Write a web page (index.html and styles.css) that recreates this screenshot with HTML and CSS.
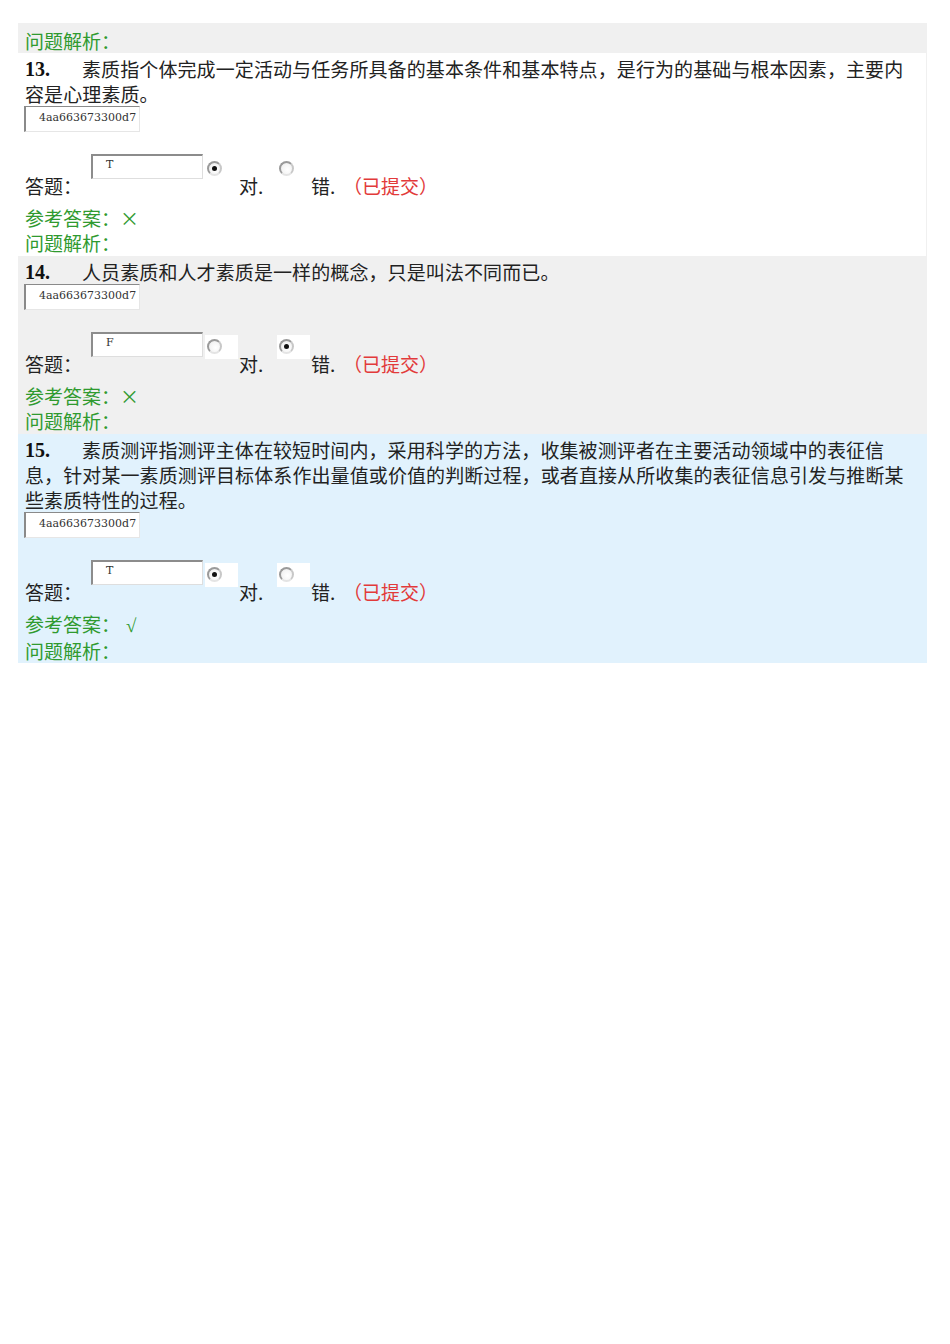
FILE: index.html
```html
<!DOCTYPE html>
<html lang="zh-CN">
<head>
<meta charset="utf-8">
<title>答题</title>
<link rel="stylesheet" href="styles.css">
</head>
<body>
<div class="list">
  <div class="sec tail gray">
    <div class="green">问题解析：</div>
  </div>

  <div class="sec white">
    <p class="stem"><b class="num">13.</b>素质指个体完成一定活动与任务所具备的基本条件和基本特点，是行为的基础与根本因素，主要内<br>容是心理素质。</p>
    <div class="code">4aa663673300d7</div>
    <div class="ans">
      <span class="lbl">答题：</span>
      <span class="tb">T</span>
      <span class="rbox"><span class="radio on"></span></span>
      <span class="opt">对.</span>
      <span class="rbox"><span class="radio"></span></span>
      <span class="opt last">错.</span>
      <span class="sub">（已提交）</span>
    </div>
    <div class="green ref">参考答案：×</div>
    <div class="green">问题解析：</div>
  </div>

  <div class="sec gray">
    <p class="stem"><b class="num">14.</b>人员素质和人才素质是一样的概念，只是叫法不同而已。</p>
    <div class="code">4aa663673300d7</div>
    <div class="ans">
      <span class="lbl">答题：</span>
      <span class="tb">F</span>
      <span class="rbox"><span class="radio"></span></span>
      <span class="opt">对.</span>
      <span class="rbox"><span class="radio on"></span></span>
      <span class="opt last">错.</span>
      <span class="sub">（已提交）</span>
    </div>
    <div class="green ref">参考答案：×</div>
    <div class="green">问题解析：</div>
  </div>

  <div class="sec blue">
    <p class="stem"><b class="num">15.</b>素质测评指测评主体在较短时间内，采用科学的方法，收集被测评者在主要活动领域中的表征信<br>息，针对某一素质测评目标体系作出量值或价值的判断过程，或者直接从所收集的表征信息引发与推断某<br>些素质特性的过程。</p>
    <div class="code">4aa663673300d7</div>
    <div class="ans">
      <span class="lbl">答题：</span>
      <span class="tb">T</span>
      <span class="rbox"><span class="radio on"></span></span>
      <span class="opt">对.</span>
      <span class="rbox"><span class="radio"></span></span>
      <span class="opt last">错.</span>
      <span class="sub">（已提交）</span>
    </div>
    <div class="green ref">参考答案：<span class="tick">√</span></div>
    <div class="green">问题解析：</div>
  </div>
</div>
</body>
</html>
```

FILE: styles.css
```css
html, body {
  margin: 0;
  padding: 0;
  background: #ffffff;
}

body {
  padding: 23px 23px 0 18px;
  font-family: "Noto Sans CJK SC", "Noto Sans", sans-serif;
  font-size: 19px;
  line-height: 25px;
  color: #222222;
}

.list {
  width: 909px;
  background: #f0f0f0;
}

.sec {
  padding: 3px 7px 1px 7px;
}

.sec.tail {
  padding-top: 5px;
  padding-bottom: 0;
}

.gray {
  background: #f0f0f0;
}

.white {
  background: #ffffff;
  margin-right: 1px;
}

.blue {
  background: #e1f2fd;
  padding-bottom: 0;
}

.stem {
  margin: 0;
  white-space: nowrap;
  letter-spacing: 0.1px;
}

.num {
  display: inline-block;
  width: 57px;
  height: 25px;
  vertical-align: top;
  font-family: "Liberation Serif", serif;
  font-weight: bold;
  font-size: 20px;
  line-height: 27px;
  letter-spacing: 0;
  color: #111111;
}

.code {
  width: 100px;
  height: 21px;
  margin-left: -1px;
  padding: 3px 0 0 13px;
  background: #ffffff;
  border-top: 1px solid #8a8a8a;
  border-left: 2px solid #8a8a8a;
  border-right: 1px solid #e6e6e6;
  border-bottom: 1px solid #e6e6e6;
  font-family: "DejaVu Serif", serif;
  font-size: 11px;
  line-height: 16px;
  color: #333333;
  overflow: hidden;
  white-space: nowrap;
}

.ans {
  display: flex;
  align-items: flex-start;
  height: 44px;
  margin-top: 22px;
  margin-bottom: 7px;
}

.lbl,
.opt,
.sub {
  align-self: flex-end;
  line-height: 25px;
}

.lbl {
  width: 57px;
}

.tb {
  width: 96px;
  height: 22px;
  margin-left: 9px;
  padding: 0 0 0 13px;
  background: #ffffff;
  border-top: 2px solid #8c8c8c;
  border-left: 2px solid #8c8c8c;
  border-right: 1px solid #dedede;
  border-bottom: 1px solid #dedede;
  font-family: "DejaVu Serif", serif;
  font-size: 11px;
  line-height: 18px;
  color: #333333;
}

.rbox {
  width: 33px;
  height: 24px;
  margin-top: 3px;
  margin-left: 2px;
  background: #ffffff;
}

.radio {
  display: block;
  position: relative;
  width: 11px;
  height: 11px;
  margin: 4px 0 0 2px;
  border-radius: 50%;
  border: 2px solid;
  border-color: #9a9a9a #c8c8c8 #e4e4e4 #9a9a9a;
  background: radial-gradient(circle at 60% 60%, #ffffff 0%, #f4f4f4 60%, #dddddd 100%);
}

.radio.on::after {
  content: "";
  position: absolute;
  left: 3px;
  top: 3px;
  width: 5px;
  height: 5px;
  border-radius: 50%;
  background: #111111;
}

.opt {
  margin-left: 1px;
  width: 38px;
}

.opt + .rbox {
  margin-left: 0;
}

.opt.last {
  width: 32px;
}

.sub {
  color: #e23a3a;
}

.green {
  color: #2f9a2f;
}

.tick {
  display: inline-block;
  margin-left: 6px;
  font-family: "Liberation Serif", serif;
  font-size: 19px;
}
```
